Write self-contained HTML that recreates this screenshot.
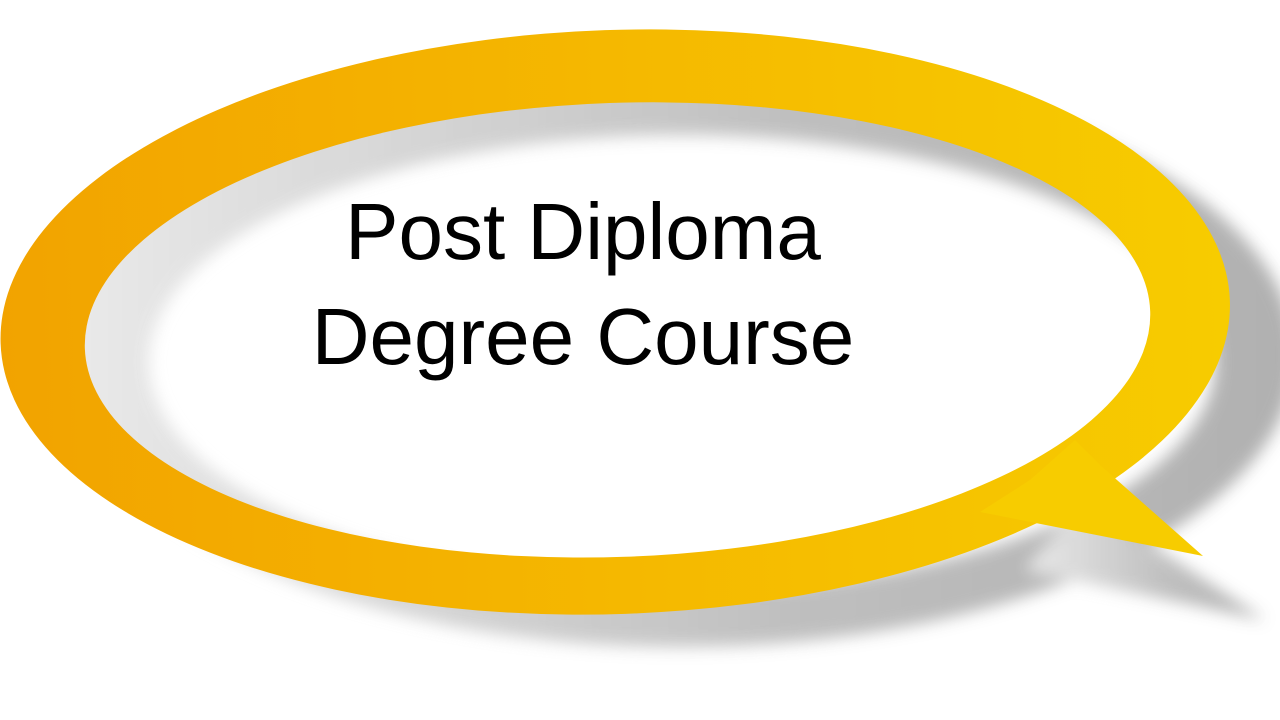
<!DOCTYPE html>
<html><head><meta charset="utf-8"><style>
html,body{margin:0;padding:0;background:#fff;width:1280px;height:720px;overflow:hidden}
svg{position:absolute;left:0;top:0}
.t{position:absolute;left:0;width:1166px;text-align:center;font-family:"Liberation Sans",sans-serif;font-size:80px;color:#000;line-height:1}
</style></head><body>
<svg width="1280" height="720" viewBox="0 0 1280 720">
<defs>
<linearGradient id="g" x1="0" y1="0" x2="1" y2="0">
<stop offset="0" stop-color="#f2a300"/>
<stop offset="0.5" stop-color="#f5b800"/>
<stop offset="1" stop-color="#f7cc00"/>
</linearGradient>
<linearGradient id="sg" x1="0" y1="0" x2="1" y2="0">
<stop offset="0" stop-color="#e8e8e8"/>
<stop offset="0.6" stop-color="#b8b8b8"/>
<stop offset="1" stop-color="#a8a8a8"/>
</linearGradient>
<filter id="b" x="-10%" y="-10%" width="120%" height="120%"><feGaussianBlur stdDeviation="8"/></filter>
</defs>
<g filter="url(#b)" transform="translate(65,40)" opacity="0.9">
<path fill="url(#sg)" fill-rule="evenodd" d="M0,315 A615,292 0 1,0 1230,315 A615,292 0 1,0 0,315 Z M84,322 A533,227 0 1,0 1150,322 A533,227 0 1,0 84,322 Z"/>
<path fill="url(#sg)" d="M1020,460 L1200,580 L960,530 Z"/>
</g>
<g transform="rotate(-2 615 315)">
<path fill="url(#g)" fill-rule="evenodd" d="M0,322 A615,292 0 1,0 1230,322 A615,292 0 1,0 0,322 Z M84,330 A533,227 0 1,0 1150,330 A533,227 0 1,0 84,330 Z"/>
</g>
<path fill="#f7cc00" d="M1075,440 L1100,465 L1203,556 L980,512 L1030,480 Z"/>
</svg>
<div class="t" style="top:192px">Post Diploma</div>
<div class="t" style="top:297px">Degree Course</div>
</body></html>
